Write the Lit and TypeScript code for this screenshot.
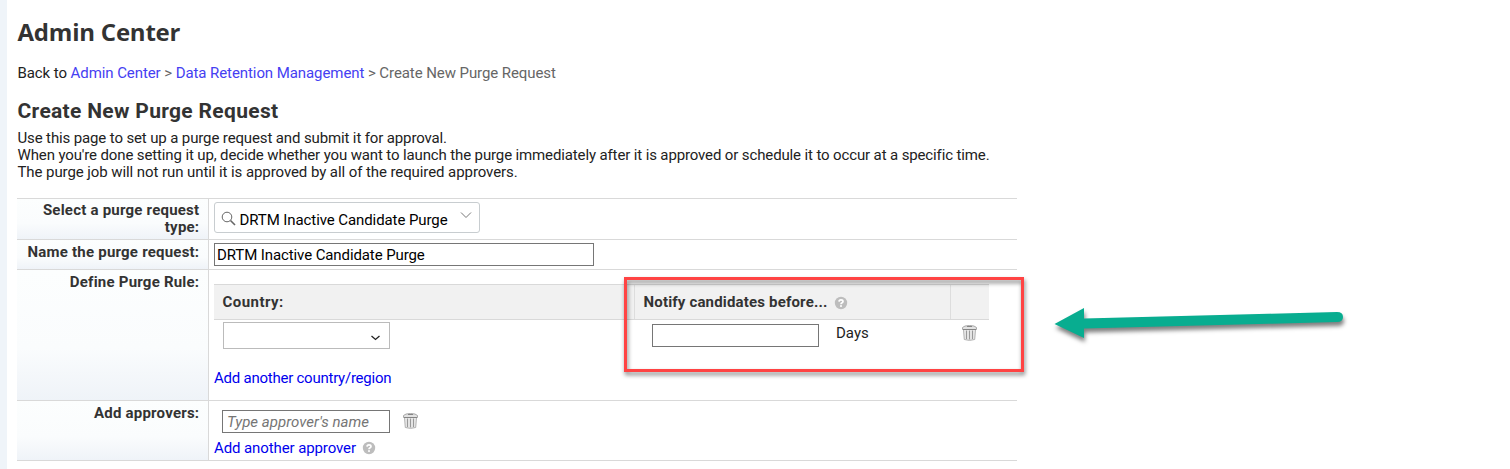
import { LitElement, html, css } from "lit";
import { customElement } from "lit/decorators.js";

const trash = html`<svg class="trash" width="17" height="18" viewBox="0 0 17 18">
  <path d="M2.5 5L3.3 15.5Q8.5 17.2 13.7 15.5L14.5 5Z" fill="#ededed" stroke="#b0b0b0" />
  <path d="M5.5 6.5V15M8.5 6.5V15.5M11.5 6.5V15" stroke="#999" stroke-width="1.2" />
  <path d="M1.5 5.5V3.5Q3 1.6 8.5 1.5Q14 1.6 15.5 3.5V5.5Z" fill="#e2e2e2" stroke="#a8a8a8" />
  <path d="M2 5.5H15M6 2.5H11" stroke="#858585" />
</svg>`;

const help = html`<svg class="help" width="14" height="14" viewBox="0 0 14 14">
  <circle cx="7" cy="7" r="6.2" fill="#bdbdbd" />
  <path d="M5 5.6Q5.1 3.9 7 3.9Q9 3.9 9 5.5Q9 6.4 7.8 7Q7 7.4 7 8.3" fill="none" stroke="#fff" stroke-width="1.7" />
  <rect x="6.1" y="9.2" width="1.8" height="1.7" fill="#fff" />
</svg>`;

@customElement("app-root")
export class AppRoot extends LitElement {
  static styles = css`
    :host { display: block; position: relative; height: 469px; overflow: hidden; background: #fff;
      color: #333; font: 15px/17px Roboto, "Liberation Sans", sans-serif; }
    * { box-sizing: border-box; }
    .page { height: 469px; border-left: 7px solid #eff4f9; padding-left: 10px; }
    .title { margin: 0; padding: 17px 0 0 0.5px; font: 700 24px/30px "Open Sans", sans-serif; letter-spacing: -0.22px; }
    .crumbs { margin-top: 17px; padding-left: 0.5px; line-height: 18px; color: #666; white-space: pre; letter-spacing: -0.08px; }
    .crumbs b { font-weight: 400; color: #222; }
    .crumbs a { color: #4540f2; }
    .sub { margin: 16px 0 0; padding-left: 0.5px; font-size: 21px; line-height: 26px; font-weight: 700; letter-spacing: 0.32px; }
    .intro { margin: 6px 0 0; padding-left: 0.5px; color: #222; white-space: nowrap; letter-spacing: -0.13px; }
    .intro span { display: block; width: max-content; }
    .intro .last { letter-spacing: -0.08px; }
    .form { margin-top: 17px; width: 1000px; border-top: 1px solid #d9d9d9; }
    .row { display: flex; border-bottom: 1px solid #d9d9d9; }
    .label { width: 192px; flex: none; padding: 4px 8.7px 0 0; text-align: right; font-weight: 700; letter-spacing: 0.22px;
      border-right: 1px solid #d9d9d9; background: linear-gradient(#fcfefe 0%, #fafcfd 60%, #eff3f8 100%); }
    .r1 .label { padding-top: 3px; }
    .body { flex: 1; padding-left: 5px; color: #000; }
    .r1 { height: 41px; } .r2 { height: 30px; } .r3 { height: 131px; } .r4 { height: 60px; }
    .picker { display: flex; margin-top: 3px; width: 266px; height: 31px; border: 1px solid #c8cdd0; border-radius: 3px; padding: 8px 7px 0 6px; }
    .picker span { margin-left: 3.5px; white-space: nowrap; width: 220.5px; flex: none; padding-top: 1px; letter-spacing: -0.09px; }
    .picker svg { flex: none; }
    .field { border: 1px solid #767676; background: #fff; white-space: nowrap; }
    .name { margin-top: 3px; width: 380px; height: 23px; padding: 3px 2px; letter-spacing: -0.1px; }
    .head { margin-top: 14px; display: flex; width: 775px; height: 36px; border-top: 1px solid #d9d9d9; border-bottom: 1px solid #d9d9d9; background: #f1f1f1; font-weight: 700; color: #333; letter-spacing: 0.17px; }
    .head div { padding: 9px 0 0 8.5px; }
    .head .c1 { width: 420px; letter-spacing: 0.45px; } .c2 { width: 316px; border-left: 1px solid #ddd; display: flex; } .c3 { width: 39px; border-left: 1px solid #ddd; }
    .c2 .help { margin: 1.5px 0 0 6.5px; }
    .rule { display: flex; height: 47px; }
    .country { margin: 2px 0 0 9px; width: 167px; height: 27px; border: 1px solid #bbb; padding: 12px 0 0 146px; line-height: 0; }
    .days { margin: 4px 0 0 262px; width: 167px; height: 23px; }
    .unit { margin: 5px 0 0 17px; width: 125px; color: #222; }
    .rule .trash { margin-top: 3.5px; }
    .link { color: #00e; white-space: nowrap; }
    .r3 .link { margin-top: 3px; display: flex; letter-spacing: -0.24px; }
    .appr { display: flex; padding: 9px 0 0 8px; height: 39px; }
    .an { width: 168px; height: 23px; padding: 3px 4px; color: #757575; font-style: italic; letter-spacing: 0.05px; }
    .appr .trash { margin: 1.5px 0 0 12px; }
    .r4 .link { display: flex; letter-spacing: -0.1px; }
    .r4 .help { margin: 1px 0 0 6.5px; }
    .box { position: absolute; left: 624px; top: 277px; width: 400px; height: 95px; border: 3px solid #ff4343; filter: drop-shadow(1px 3px 2px rgba(0,0,0,.5)); }
    .arrow { position: absolute; left: 1040px; top: 290px; filter: drop-shadow(1px 4px 2px rgba(0,0,0,.5)); }
  `;
  render() {
    return html`<div class="page">
      <h1 class="title"><span>Admin Center</span></h1>
      <div class="crumbs"><b>Back to </b><a>Admin Center</a> &gt; <a>Data Retention Management</a> &gt; Create New Purge Request</div>
      <h2 class="sub"><span>Create New Purge Request</span></h2>
      <p class="intro"><span>Use this page to set up a purge request and submit it for approval.</span><span>When you're done setting it up, decide whether you want to launch the purge immediately after it is approved or schedule it to occur at a specific time.</span><span class="last">The purge job will not run until it is approved by all of the required approvers.</span></p>
      <div class="form">
        <div class="row r1"><div class="label">Select a purge request<br>type:</div><div class="body">
          <div class="picker"><svg width="15" height="15" viewBox="0 0 15 15" fill="none" stroke="#666"><circle cx="6" cy="6" r="4.8"/><path d="M9.5 9.5L14 14" stroke-width="1.6"/></svg><span>DRTM Inactive Candidate Purge</span>
          <svg width="12" height="9" viewBox="0 0 12 9"><path d="M1 1.5L6 6.5L11 1.5" fill="none" stroke="#777"/></svg></div></div></div>
        <div class="row r2"><div class="label">Name the purge request:</div><div class="body"><div class="field name">DRTM Inactive Candidate Purge</div></div></div>
        <div class="row r3"><div class="label">Define Purge Rule:</div><div class="body">
          <div class="head"><div class="c1">Country:</div><div class="c2"><span>Notify candidates before...</span>${help}</div><div class="c3"></div></div>
          <div class="rule"><div class="country"><svg width="11" height="6" viewBox="0 0 11 6"><path d="M1.5 1L5.5 4.5L9.5 1" fill="none" stroke="#222" stroke-width="1.3"/></svg></div><div class="field days"></div><div class="unit">Days</div>${trash}</div>
          <div class="link"><span>Add another country/region</span></div></div></div>
        <div class="row r4"><div class="label">Add approvers:</div><div class="body"><div class="appr"><div class="field an">Type approver's name</div>${trash}</div>
          <div class="link"><span>Add another approver</span>${help}</div></div></div>
      </div></div>
      <div class="box"></div>
      <svg class="arrow" width="320" height="70" viewBox="0 0 320 70"><path d="M14.5 34L44 18V28.5L297 22Q303 22 303 27Q303 32 297 32L44 38.5V48Z" fill="#08ad90"/></svg>`;
  }
}
